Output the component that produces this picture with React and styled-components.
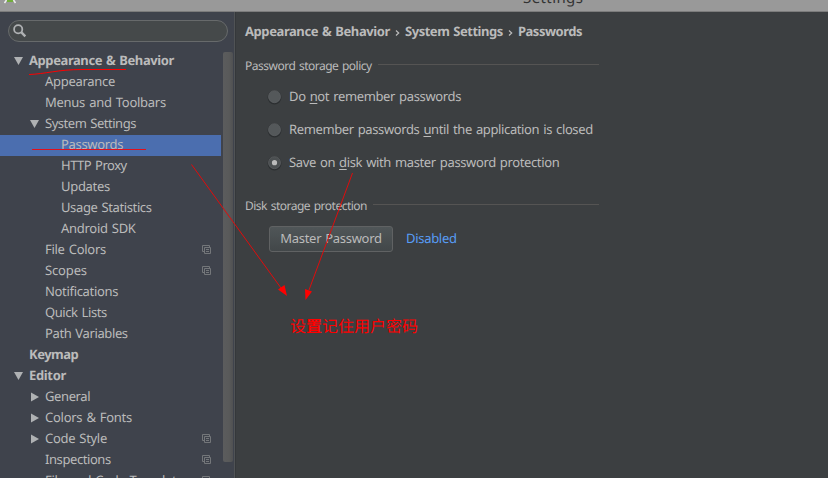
import React from "react";
import styled, { createGlobalStyle } from "styled-components";

const GlobalStyle = createGlobalStyle`
  * { box-sizing: border-box; }
  html, body { margin: 0; overflow: hidden; background: #3c3f41; }
`;

const Window = styled.div`
  position: relative;
  display: flex;
  flex-direction: column;
  width: 828px;
  height: 478px;
  overflow: hidden;
  background: #3c3f41;
  color: #bbbbbb;
  font-family: "Noto Sans", "Noto Sans CJK SC", sans-serif;
  font-size: 13px;
  word-spacing: 1px;
  white-space: nowrap;
  text-rendering: geometricPrecision;
`;

const TitleBar = styled.header`
  flex: none;
  display: flex;
  align-items: flex-end;
  height: 12px;
  overflow: hidden;
  background: #999999;
  border-bottom: 1px solid #7c7c7c;
`;

const TitleIcon = styled.svg`
  flex: none;
  align-self: flex-start;
  margin-left: 3px;
`;

const Title = styled.span`
  margin-left: 504px;
  color: #333333;
  font-size: 15px;
  line-height: 20px;
  letter-spacing: 0.4px;
  margin-bottom: 3px;
`;

const Body = styled.div`
  display: flex;
  flex: 1;
  min-height: 0;
`;

const Sidebar = styled.aside`
  display: flex;
  flex-direction: column;
  width: 236px;
  background: #3f434c;
  border-right: 1px solid #35383b;
  box-shadow: inset -1px 0 #505355;
`;

const Search = styled.div`
  flex: none;
  display: flex;
  align-items: center;
  width: 220px;
  height: 22px;
  margin: 8px 0 9px 8px;
  padding-left: 4px;
  border: 1px solid #676a6b;
  border-radius: 11px;
  background: #45494a;
`;

const TreePane = styled.div`
  display: flex;
  flex: 1;
  min-height: 0;
`;

const Tree = styled.div`
  width: 221px;
  overflow: hidden;
`;

const ScrollThumb = styled.div`
  width: 10px;
  height: 410px;
  margin: 1px 0 0 2px;
  border-radius: 2px;
  background: linear-gradient(90deg, #5b5c5d, #595a5a 60%, #505152);
`;

const Row = styled.div`
  display: flex;
  align-items: center;
  height: 21px;
  padding-left: ${(p) => 13 + p.$level * 16}px;
  padding-right: 9px;
  background: ${(p) => (p.$selected ? "#4b6eaf" : "transparent")};
`;

const ArrowSlot = styled.span`
  display: flex;
  align-items: center;
  width: 16px;
  padding-bottom: 1px;
`;

const Label = styled.span`
  flex: 1;
  padding-bottom: 2px;
  line-height: 19px;
  font-weight: ${(p) => (p.$bold ? 700 : 400)};
`;

const Fit = styled.span`
  letter-spacing: ${(p) => p.$track || 0}px;
`;

const Main = styled.main`
  flex: 1;
  padding: 9px 0 0 9px;
`;

const Breadcrumb = styled.div`
  display: flex;
  height: 22px;
  line-height: 21px;
  font-weight: 700;
`;

const Crumb = styled.span`
  letter-spacing: ${(p) => p.$track || 0}px;
  width: ${(p) => p.$width}px;
`;

const Chevron = styled.svg`
  flex: none;
  width: 15px;
  height: 21px;
`;

const SectionHeader = styled.div`
  display: flex;
  align-items: center;
  width: 354px;
  height: 20px;
  margin-top: ${(p) => p.$top}px;
  font-size: 12px;
  letter-spacing: -0.5px;
`;

const SectionTitle = styled.span`
  flex: none;
  width: ${(p) => p.$width}px;
`;

const Rule = styled.span`
  flex: 1;
  height: 1px;
  margin-bottom: 2px;
  background: #555453;
`;

const Options = styled.div`
  display: flex;
  flex-direction: column;
  gap: 12px;
  margin: 11px 0 0 22px;
`;

const Option = styled.div`
  display: flex;
  align-items: center;
  height: 21px;
`;

const OptionText = styled(Fit)`
  padding-bottom: 2px;
`;

const Radio = styled.svg`
  flex: none;
  width: 16px;
  height: 16px;
  margin-right: 6px;
`;

const Mnemonic = styled.span`
  text-decoration: underline;
  text-decoration-thickness: 1px;
  text-underline-offset: 2px;
`;

const Actions = styled.div`
  display: flex;
  align-items: center;
  gap: 13px;
  margin: 11px 0 0 24px;
  letter-spacing: -0.3px;
`;

const Button = styled.button`
  width: 124px;
  height: 26px;
  padding: 0 0 2px;
  border: 1px solid #606263;
  border-radius: 3px;
  background: linear-gradient(#505658, #424749);
  color: #bbbbbb;
  font: inherit;
  letter-spacing: -0.3px;
  word-spacing: 1px;
  line-height: 22px;
`;

const Link = styled.span`
  padding-bottom: 2px;
  color: #589df6;
`;

const Note = styled.div`
  position: absolute;
  left: 290px;
  top: 314px;
  color: #ff0000;
  font: 400 16px/22px "Noto Sans CJK SC", sans-serif;
`;

const Heavy = styled.span`
  font-weight: 700;
`;

const Markup = styled.svg`
  position: absolute;
  inset: 0;
  pointer-events: none;
`;

const SharedMark = styled.svg`
  flex: none;
  margin-bottom: 2px;
`;

const items = [
  { text: "Appearance & Behavior", level: 0, arrow: "down", bold: true, track: -0.42 },
  { text: "Appearance", level: 1, track: -0.3 },
  { text: "Menus and Toolbars", level: 1, track: -0.27 },
  { text: "System Settings", level: 1, arrow: "down", track: -0.47 },
  { text: "Passwords", level: 2, selected: true, track: -0.33 },
  { text: "HTTP Proxy", level: 2, track: -0.5 },
  { text: "Updates", level: 2, track: -0.3 },
  { text: "Usage Statistics", level: 2, track: -0.38 },
  { text: "Android SDK", level: 2, track: -0.28 },
  { text: "File Colors", level: 1, copy: true, track: -0.28 },
  { text: "Scopes", level: 1, copy: true, track: -0.15 },
  { text: "Notifications", level: 1, track: -0.32 },
  { text: "Quick Lists", level: 1, track: -0.42 },
  { text: "Path Variables", level: 1, track: -0.38 },
  { text: "Keymap", level: 0, bold: true, track: -0.5 },
  { text: "Editor", level: 0, arrow: "down", bold: true, track: -0.35 },
  { text: "General", level: 1, arrow: "right", track: -0.4 },
  { text: "Colors & Fonts", level: 1, arrow: "right", track: -0.27 },
  { text: "Code Style", level: 1, arrow: "right", copy: true, track: -0.3 },
  { text: "Inspections", level: 1, copy: true, track: -0.42 },
  { text: "File and Code Templates", level: 1, copy: true, track: -0.3 },
];

const Arrow = ({ dir }) => (
  <svg width="11" height="10" viewBox="0 0 11 10" fill="#afb1b3">
    <path d={dir === "down" ? "M1 1H10L5.5 9Z" : "M2 .5V9.5L10 5Z"} />
  </svg>
);

const CopyIcon = () => (
  <SharedMark width="10" height="9" viewBox="0 0 10 9" fill="none" stroke="#74777a">
    <path d="M2 6.5H.5V.5H7.5V2M2.5 2.5H8.5V8.5H2.5ZM4 4.5H7M4 6.5H7" />
  </SharedMark>
);

const RadioMark = ({ checked }) => (
  <Radio viewBox="0 0 16 16">
    <circle cx="7.5" cy="8.5" r="6.9" fill="#2c2f31" />
    <circle cx="7.5" cy="7.7" r="6" fill={checked ? "#4b4f51" : "#54585a"} stroke="#606365" strokeWidth=".7" />
    {checked && <circle cx="7.5" cy="7.7" r="2.6" fill="#bbbbbb" />}
  </Radio>
);

const Separator = () => (
  <Chevron viewBox="0 0 15 21" fill="none" stroke="#bbbbbb" strokeWidth="1.2">
    <path d="M6 9.5L8.7 12L6 14.5" />
  </Chevron>
);

export default function App() {
  return (
    <Window>
      <GlobalStyle />
      <TitleBar>
        <TitleIcon width="16" height="11" viewBox="0 0 16 11">
          <path d="M4 0H10.500L10 2H4Z" fill="#72ad3b" />
          <path d="M3.500 0L1.500 3M10.500 0L12.500 3" stroke="#eeeeee" strokeWidth="1.5" />
        </TitleIcon>
        <Title>Settings</Title>
      </TitleBar>
      <Body>
        <Sidebar>
          <Search>
            <svg width="14" height="14" viewBox="0 0 14 14" fill="none" stroke="#afb1b3">
              <circle cx="5.2" cy="5.2" r="4.1" strokeWidth="1.8" />
              <path d="M8.2 8.2L12.3 12.3" strokeWidth="2.4" />
            </svg>
          </Search>
          <TreePane>
            <Tree>
              {items.map((it) => (
                <Row key={it.text} $level={it.level} $selected={it.selected}>
                  <ArrowSlot>{it.arrow && <Arrow dir={it.arrow} />}</ArrowSlot>
                  <Label $bold={it.bold}>
                    <Fit $track={it.track}>{it.text}</Fit>
                  </Label>
                  {it.copy && <CopyIcon />}
                </Row>
              ))}
            </Tree>
            <ScrollThumb />
          </TreePane>
        </Sidebar>
        <Main>
          <Breadcrumb>
            <Crumb $width={145} $track={-0.42}>Appearance &amp; Behavior</Crumb>
            <Separator />
            <Crumb $width={98} $track={-0.47}>System Settings</Crumb>
            <Separator />
            <Crumb $width={64} $track={-0.5}>Passwords</Crumb>
          </Breadcrumb>
          <SectionHeader $top={12}>
            <SectionTitle $width={133}>Password storage policy</SectionTitle>
            <Rule />
          </SectionHeader>
          <Options>
            <Option>
              <RadioMark />
              <OptionText $track={-0.36}>Do <Mnemonic>n</Mnemonic>ot remember passwords</OptionText>
            </Option>
            <Option>
              <RadioMark />
              <OptionText $track={-0.38}>Remember passwords <Mnemonic>u</Mnemonic>ntil the application is closed</OptionText>
            </Option>
            <Option>
              <RadioMark checked />
              <OptionText $track={-0.37}>Save on <Mnemonic>d</Mnemonic>isk with master password protection</OptionText>
            </Option>
          </Options>
          <SectionHeader $top={22}>
            <SectionTitle $width={128}>Disk storage protection</SectionTitle>
            <Rule />
          </SectionHeader>
          <Actions>
            <Button>Master Password</Button>
            <Link>Disabled</Link>
          </Actions>
        </Main>
      </Body>
      <Note>设<Heavy>置</Heavy>记住用户密码</Note>
      <Markup width="828" height="478" viewBox="0 0 828 478" fill="none" stroke="#ff0000">
        <path d="M29 74.5C45 74 58 69.5 82 69.5H126" />
        <path d="M32 149.5H146" stroke="#e0101c" />
        <path d="M191.5 164.5L281 288M352.5 173L309 290" stroke="#e00c0c" />
        <path d="M287 296L278 289.5L284.500 285ZM305.500 300L305 289L312 291.500Z" fill="#ff0000" stroke="none" />
      </Markup>
    </Window>
  );
}
